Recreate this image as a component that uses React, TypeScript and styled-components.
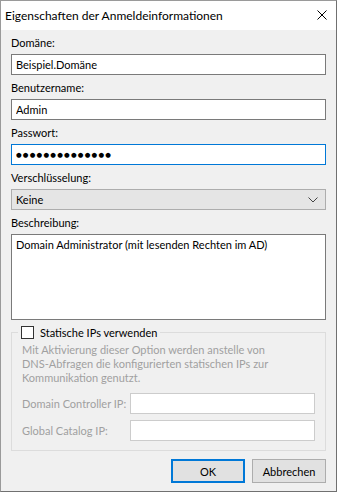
import { createGlobalStyle, styled } from "styled-components";

const GlobalStyle = createGlobalStyle`
  html, body {
    margin: 0;
    padding: 0;
    background: #ffffff;
  }
  * {
    box-sizing: border-box;
  }
`;

const FONT = `Lato, "Noto Sans", Arial, sans-serif`;

export default function App() {
  return (
    <>
      <GlobalStyle />
      <Window>
        <TitleBar>
          <Title>Eigenschaften der Anmeldeinformationen</Title>
          <CloseButton aria-label="Schließen">
            <svg width="10" height="10" viewBox="0 0 10 10">
              <path d="M0.5 0.5 L9.5 9.5 M9.5 0.5 L0.5 9.5" stroke="#000" strokeWidth="1" />
            </svg>
          </CloseButton>
        </TitleBar>
        <Body>
          <Field>
            <Label>Domäne:</Label>
            <TextBox readOnly value="Beispiel.Domäne" />
          </Field>
          <Field>
            <Label>Benutzername:</Label>
            <TextBox readOnly value="Admin" />
          </Field>
          <Field>
            <Label>Passwort:</Label>
            <PasswordBox readOnly $focused value={"\u25CF".repeat(14)} />
          </Field>
          <Field>
            <Label>Verschlüsselung:</Label>
            <ComboBox>
              <span>Keine</span>
              <svg width="10" height="6" viewBox="0 0 10 6">
                <path d="M0.5 0.5 L5 5 L9.5 0.5" fill="none" stroke="#444" strokeWidth="1" />
              </svg>
            </ComboBox>
          </Field>
          <Field>
            <Label>Beschreibung:</Label>
            <MultiLine readOnly value="Domain Administrator (mit lesenden Rechten im AD)" />
          </Field>
          <GroupBox>
            <GroupLegend>
              <CheckBox />
              <span>Statische IPs verwenden</span>
            </GroupLegend>
            <Hint>
              Mit Aktivierung dieser Option werden anstelle von
              <br />
              DNS-Abfragen die konfigurierten statischen IPs zur
              <br />
              Kommunikation genutzt.
            </Hint>
            <IpGrid>
              <DisabledLabel>Domain Controller IP:</DisabledLabel>
              <DisabledBox disabled />
              <DisabledLabel>Global Catalog IP:</DisabledLabel>
              <DisabledBox disabled />
            </IpGrid>
          </GroupBox>
          <ButtonRow>
            <DialogButton $primary>OK</DialogButton>
            <DialogButton>Abbrechen</DialogButton>
          </ButtonRow>
        </Body>
      </Window>
    </>
  );
}

const Window = styled.div`
  width: 337px;
  height: 492px;
  border: 1px solid #9a9a9a;
  border-right-color: #707070;
  border-bottom-color: #707070;
  background: #f0f0f0;
  display: flex;
  flex-direction: column;
  font-family: ${FONT};
  font-size: 11px;
  color: #000;
`;

const TitleBar = styled.div`
  flex-shrink: 0;
  height: 29px;
  background: #ffffff;
  display: flex;
  align-items: center;
  justify-content: space-between;
  padding: 0 8px 1px 4px;
`;

const Title = styled.div`
  font-size: 12px;
  color: #000;
`;

const CloseButton = styled.div`
  width: 10px;
  height: 10px;
  display: flex;
  margin-top: -1px;
  margin-right: 1px;
`;

const Body = styled.div`
  flex: 1;
  display: flex;
  flex-direction: column;
  padding: 5px 10px 0 10px;
`;

const Field = styled.div`
  display: flex;
  flex-direction: column;
  margin-bottom: 5px;
`;

const Label = styled.div`
  height: 16px;
  line-height: 16px;
  margin-bottom: 3px;
`;

const TextBox = styled.input`
  height: 21px;
  width: 100%;
  border: 1px solid #7a7a7a;
  background: #fff;
  padding: 0 4px;
  margin: 0;
  font-family: ${FONT};
  font-size: 11px;
  color: #000;
  outline: none;
`;

const PasswordBox = styled(TextBox)<{ $focused?: boolean }>`
  border-color: ${(p) => (p.$focused ? "#0078d7" : "#7a7a7a")};
  font-family: "DejaVu Sans", sans-serif;
  font-size: 6.5px;
  letter-spacing: 1.2px;
  padding-left: 4px;
`;

const ComboBox = styled.div`
  height: 21px;
  border: 1px solid #adadad;
  background: #e5e5e5;
  display: flex;
  align-items: center;
  justify-content: space-between;
  padding: 0 7px 0 4px;
`;

const MultiLine = styled.textarea`
  height: 86px;
  width: 100%;
  border: 1px solid #7a7a7a;
  background: #fff;
  padding: 2px 4px;
  margin: 0;
  resize: none;
  font-family: ${FONT};
  font-size: 11px;
  line-height: 15px;
  color: #000;
  outline: none;
`;

const GroupBox = styled.fieldset`
  flex-shrink: 0;
  margin: -1px 0 0 0;
  padding: 3px 10px 9px 10px;
  border: 1px solid #dcdcdc;
  min-width: 0;
`;

const GroupLegend = styled.legend`
  margin-left: -4px;
  padding: 0 3px;
  display: flex;
  align-items: center;
  gap: 6px;
  height: 16px;
`;

const CheckBox = styled.span`
  width: 13px;
  height: 13px;
  border: 1px solid #333;
  background: #fff;
  display: inline-block;
`;

const Hint = styled.div`
  color: #a0a0a0;
  line-height: 14px;
  margin-bottom: 8px;
  white-space: nowrap;
`;

const IpGrid = styled.div`
  display: grid;
  grid-template-columns: 108px 1fr;
  row-gap: 6px;
  align-items: center;
`;

const DisabledLabel = styled.div`
  color: #a0a0a0;
  white-space: nowrap;
`;

const DisabledBox = styled.input`
  height: 21px;
  width: 100%;
  border: 1px solid #cccccc;
  background: #fff;
  margin: 0;
  padding: 0;
`;

const ButtonRow = styled.div`
  display: flex;
  justify-content: flex-end;
  gap: 7px;
  margin-top: 8px;
`;

const DialogButton = styled.div<{ $primary?: boolean }>`
  width: 74px;
  height: 24px;
  display: flex;
  align-items: center;
  justify-content: center;
  background: #e1e1e1;
  border: ${(p) => (p.$primary ? "2px solid #0078d7" : "1px solid #adadad")};
`;
